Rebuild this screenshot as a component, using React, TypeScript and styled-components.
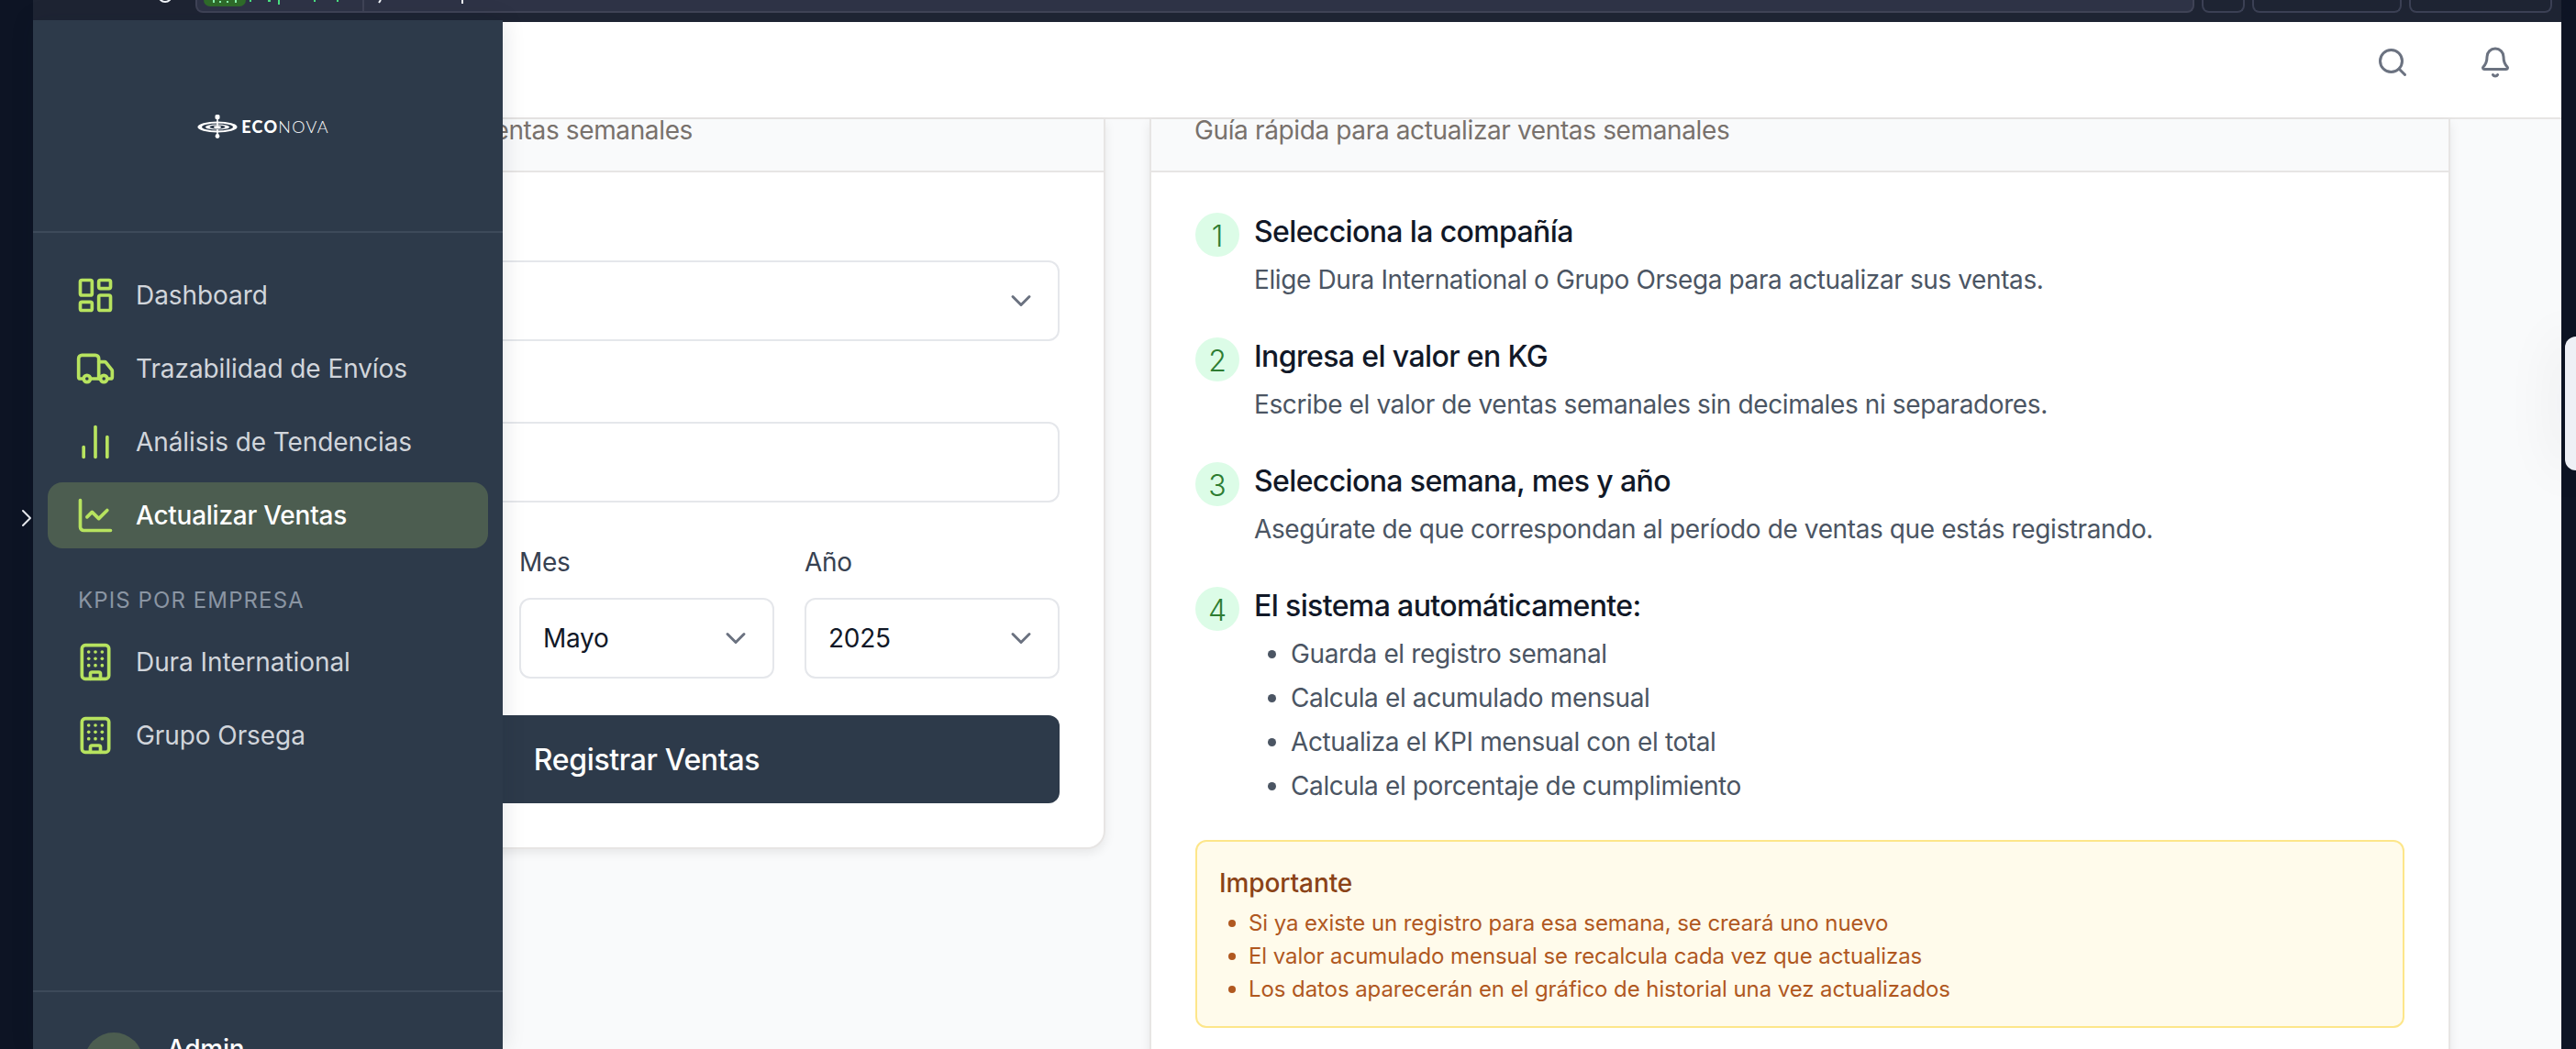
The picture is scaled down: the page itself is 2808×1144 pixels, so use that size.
import React from "react";
import styled, { createGlobalStyle } from "styled-components";
import { LayoutDashboard, Truck, ChartNoAxesColumn, ChartLine, Building, Search, Bell, ChevronDown, ChevronRight } from "lucide-react";

const Global = createGlobalStyle`
  html, body { margin: 0; padding: 0; height: 100%; overflow: hidden; background: #0d1424; }
  * { box-sizing: border-box; }
  #root { height: 100%; }
  body { font-family: Inter, "Liberation Sans", sans-serif; }
`;

const Desktop = styled.div`
  position: relative;
  width: 2808px;
  height: 1144px;
  overflow: hidden;
  background: #0d1424;
  padding: 0 16px 0 36px;
  display: flex;
  flex-direction: column;
`;

const Handle = styled.div`
  position: absolute;
  left: 13px;
  top: 549px;
  color: #e5e7eb;
  display: flex;
`;

const EdgeTab = styled.div`
  position: absolute;
  right: 0;
  top: 367px;
  width: 12px;
  height: 146px;
  background: #eef0f6;
  border-radius: 16px 0 0 16px;
  box-shadow: 0 0 60px rgba(15, 23, 42, 0.16);
`;

const BrowserBar = styled.div`
  flex: 0 0 24px;
  height: 24px;
  background: #1e2433;
  display: flex;
  align-items: flex-start;
  padding-left: 136px;
  overflow: hidden;
`;

const Ring = styled.span`
  width: 16px;
  height: 16px;
  margin-top: -13px;
  border: 2px solid #f1f5f9;
  border-radius: 50%;
  flex: none;
  margin-right: 25px;
`;

const Address = styled.div`
  flex: 0 0 2179px;
  height: 14px;
  background: #2e3346;
  border: 2px solid #3f4356;
  border-top: 0;
  border-radius: 0 0 8px 8px;
  display: flex;
  overflow: hidden;
`;

const BarButton = styled.span<{ $w: number }>`
  flex: 0 0 ${(p) => p.$w}px;
  height: 14px;
  margin-left: 8px;
  border: 2px solid #3b4054;
  border-top: 0;
  border-radius: 0 0 8px 8px;
`;

const Main = styled.div`
  flex: 1;
  min-height: 0;
  display: flex;
  flex-direction: column;
  background: #f9fafb;
`;

const Header = styled.header`
  flex: 0 0 106px;
  background: #fff;
  border-bottom: 2px solid #e7e5e4;
  display: flex;
  justify-content: flex-end;
  align-items: flex-start;
  gap: 76px;
  padding: 26px 54px 0 0;
  color: #6b7280;
`;

const Content = styled.div`
  flex: 1;
  min-height: 0;
  display: grid;
  grid-template-columns: 1000px 1418px;
  column-gap: 48px;
  padding-left: 169px;
  align-items: start;
`;

const Card = styled.section`
  background: #fff;
  border: 2px solid #e7e5e4;
  border-top: 0;
  border-radius: 0 0 20px 20px;
  box-shadow: 0 4px 12px rgba(0, 0, 0, 0.08);
`;

const CardHead = styled.div<{ $inset: number }>`
  height: 58px;
  background: #f9fafb;
  border-bottom: 2px solid #e7e5e4;
  padding-left: ${(p) => p.$inset}px;
  font-size: 28px;
  line-height: 24px;
  letter-spacing: -0.37px;
  color: #78716c;
  white-space: nowrap;
`;

const FormBody = styled.div`
  padding: 37px 48px 48px 48px;
  display: flex;
  flex-direction: column;
  gap: 29px;
`;

const Field = styled.div`
  display: flex;
  flex-direction: column;
  gap: 19px;
  min-width: 0;
`;

const Label = styled.label`
  min-height: 40px;
  font-size: 28px;
  line-height: 40px;
  letter-spacing: -0.3px;
  color: #374151;
`;

const Control = styled.div`
  height: 88px;
  border: 2px solid #e5e7eb;
  border-radius: 12px;
  background: #fff;
  display: flex;
  align-items: center;
  justify-content: space-between;
  padding: 0 22px 0 24px;
  font-size: 28px;
  letter-spacing: -0.3px;
  color: #111827;
  svg { color: #6b7280; margin-left: auto; }
`;

const DateRow = styled.div`
  display: grid;
  grid-template-columns: repeat(3, 1fr);
  gap: 33px;
  margin-top: 16px;
`;

const Submit = styled.button`
  height: 96px;
  margin-top: 11px;
  border: 0;
  border-radius: 12px;
  background: #2d3a4a;
  color: #fff;
  font-family: inherit;
  font-size: 32px;
  letter-spacing: -0.35px;
  font-weight: 500;
`;

const GuideBody = styled.div`
  padding: 44px 48px 48px 48px;
`;

const Step = styled.div`
  display: flex;
  gap: 16px;
  margin-bottom: 41px;
`;

const StepNum = styled.span`
  flex: 0 0 48px;
  height: 48px;
  padding-top: 2px;
  border-radius: 50%;
  background: #dcfce7;
  color: #2e7d32;
  font-size: 32px;
  font-weight: 300;
  display: flex;
  align-items: center;
  justify-content: center;
`;

const StepTitle = styled.div`
  font-size: 32px;
  line-height: 42px;
  letter-spacing: -0.62px;
  font-weight: 500;
  color: #111827;
`;

const StepText = styled.div`
  margin-top: 9px;
  font-size: 28px;
  line-height: 44px;
  letter-spacing: -0.39px;
  color: #4b5563;
`;

const Bullets = styled.ul`
  list-style: none;
  margin: 11px 0 0;
  padding: 0 0 0 40px;
  display: flex;
  flex-direction: column;
  gap: 8px;
`;

const Bullet = styled.li`
  position: relative;
  font-size: 28px;
  line-height: 40px;
  letter-spacing: -0.37px;
  color: #4b5563;
  &::before {
    content: "";
    position: absolute;
    left: -25px;
    top: 16px;
    width: 9px;
    height: 9px;
    border-radius: 50%;
    background: #4b5563;
  }
`;

const Notice = styled.div`
  margin-top: -2px;
  height: 205px;
  background: #fffbeb;
  border: 2px solid #fde68a;
  border-radius: 12px;
  padding: 25px 24px 0;
`;

const NoticeTitle = styled.div`
  font-size: 28px;
  line-height: 40px;
  letter-spacing: -0.1px;
  font-weight: 500;
  color: #8a4318;
`;

const NoticeList = styled.ul`
  list-style: none;
  margin: 6px 0 0;
  padding: 0 0 0 32px;
`;

const NoticeItem = styled.li`
  position: relative;
  font-size: 24px;
  line-height: 36px;
  letter-spacing: -0.08px;
  color: #b0581f;
  &::before {
    content: "";
    position: absolute;
    left: -22px;
    top: 14px;
    width: 8px;
    height: 8px;
    border-radius: 50%;
    background: #b0581f;
  }
`;

const Sidebar = styled.aside`
  position: absolute;
  left: 36px;
  top: 22px;
  bottom: 0;
  width: 512px;
  background: #2d3a4a;
  display: flex;
  flex-direction: column;
  box-shadow: 0 0 24px rgba(15, 23, 42, 0.12);
`;

const Brand = styled.div`
  flex: 0 0 232px;
  border-bottom: 2px solid #3d4a5a;
  display: flex;
  align-items: flex-start;
  justify-content: center;
  padding: 103px 10px 0 0;
  gap: 4px;
  color: #fff;
`;

const BrandText = styled.span`
  font-family: Lato, Inter, sans-serif;
  font-size: 18px;
  line-height: 26px;
  letter-spacing: 1.3px;
  font-weight: 300;
  strong { font-weight: 900; }
`;

const Nav = styled.nav`
  flex: 1;
  padding: 32px 16px 0;
  display: flex;
  flex-direction: column;
  gap: 8px;
`;

const NavItem = styled.a<{ $active?: boolean }>`
  height: 72px;
  border-radius: 16px;
  display: flex;
  align-items: center;
  gap: 22px;
  padding-left: 30px;
  font-size: 28px;
  letter-spacing: ${(p) => (p.$active ? "-0.25px" : "-0.08px")};
  color: ${(p) => (p.$active ? "#fff" : "#d1d5db")};
  font-weight: ${(p) => (p.$active ? 500 : 400)};
  background: ${(p) => (p.$active ? "#4c5d50" : "transparent")};
  svg { color: #b7e35f; flex: none; }
`;

const NavLabel = styled.div`
  margin: 33px 0 7px;
  padding-left: 33px;
  font-size: 24px;
  line-height: 32px;
  letter-spacing: 1.1px;
  color: #8a95a3;
`;

const Footer = styled.div`
  flex: 0 0 64px;
  overflow: hidden;
  border-top: 2px solid #3d4a5a;
  padding: 44px 0 0 56px;
  display: flex;
  gap: 26px;
`;

const Avatar = styled.span`
  flex: 0 0 64px;
  height: 64px;
  border-radius: 50%;
  background: #4c5d50;
`;

const UserName = styled.span`
  font-size: 28px;
  line-height: 36px;
  letter-spacing: -0.3px;
  font-weight: 500;
  color: #fff;
`;

const Logo = () => (
  <svg width="44" height="26" viewBox="0 0 44 26" fill="none">
    <ellipse cx="22" cy="13.5" rx="21.5" ry="6" fill="#fff" />
    <ellipse cx="22" cy="13.5" rx="17" ry="4" fill="#2d3a4a" />
    <ellipse cx="22" cy="13.5" rx="13" ry="3" fill="#fff" />
    <ellipse cx="22" cy="13.5" rx="8.5" ry="2" fill="#2d3a4a" />
    <ellipse cx="22" cy="13.5" rx="4" ry="1.6" fill="#fff" />
    <rect x="21.2" y="3" width="1.6" height="9" fill="#fff" />
    <rect x="19.5" y="0" width="5" height="5" rx="1.5" fill="#fff" />
    <rect x="21.2" y="16" width="1.6" height="6" fill="#fff" />
    <circle cx="22" cy="23.5" r="2.4" fill="#fff" />
  </svg>
);

/* The strip of the browser's address bar: only the feet of its glyphs are in view. */
const AddressBits = () => (
  <svg width="320" height="12" viewBox="0 0 320 12" fill="none">
    <rect x="7" y="-8" width="46" height="15" rx="7" fill="#2f6b2a" />
    <rect x="17" y="0" width="2" height="3" fill="#86efac" />
    <rect x="24" y="1" width="2" height="2" fill="#86efac" />
    <rect x="32" y="1" width="2" height="2" fill="#86efac" />
    <rect x="41" y="0" width="2" height="3" fill="#86efac" />
    <rect x="57" y="0" width="2" height="2" fill="#4ade80" />
    <rect x="77" y="0" width="3" height="2" fill="#4ade80" />
    <rect x="88" y="0" width="2" height="5" fill="#4ade80" />
    <rect x="127" y="0" width="2" height="2" fill="#4ade80" />
    <rect x="152" y="0" width="2" height="2" fill="#4ade80" />
    <rect x="180" y="0" width="2" height="12" fill="#3f4356" />
    <path d="M200 0l-2 3" stroke="#f1f5f9" strokeWidth="2" />
    <rect x="288" y="0" width="2" height="4" fill="#f1f5f9" />
  </svg>
);

const steps = [
  { n: 1, t: "Selecciona la compañía", d: "Elige Dura International o Grupo Orsega para actualizar sus ventas." },
  { n: 2, t: "Ingresa el valor en KG", d: "Escribe el valor de ventas semanales sin decimales ni separadores." },
  { n: 3, t: "Selecciona semana, mes y año", d: "Asegúrate de que correspondan al período de ventas que estás registrando." },
];

const auto = ["Guarda el registro semanal", "Calcula el acumulado mensual", "Actualiza el KPI mensual con el total", "Calcula el porcentaje de cumplimiento"];
const notes = [
  "Si ya existe un registro para esa semana, se creará uno nuevo",
  "El valor acumulado mensual se recalcula cada vez que actualizas",
  "Los datos aparecerán en el gráfico de historial una vez actualizados",
];

export default function App() {
  return (
    <>
      <Global />
      <Desktop>
        <BrowserBar>
          <Ring />
          <Address>
            <AddressBits />
          </Address>
          <BarButton $w={47} />
          <BarButton $w={163} />
          <BarButton $w={156} />
        </BrowserBar>
        <Main>
          <Header>
            <Search size={36} strokeWidth={2} />
            <Bell size={36} strokeWidth={2} />
          </Header>
          <Content>
            <Card>
              <CardHead $inset={273}>las ventas semanales</CardHead>
              <FormBody>
                <Field>
                  <Label />
                  <Control><ChevronDown size={36} strokeWidth={2} /></Control>
                </Field>
                <Field>
                  <Label />
                  <Control />
                </Field>
                <DateRow>
                  <Field>
                    <Label />
                    <Control />
                  </Field>
                  <Field>
                    <Label>Mes</Label>
                    <Control>Mayo<ChevronDown size={36} strokeWidth={2} /></Control>
                  </Field>
                  <Field>
                    <Label>Año</Label>
                    <Control>2025<ChevronDown size={36} strokeWidth={2} /></Control>
                  </Field>
                </DateRow>
                <Submit>Registrar Ventas</Submit>
              </FormBody>
            </Card>
            <Card>
              <CardHead $inset={47}>Guía rápida para actualizar ventas semanales</CardHead>
              <GuideBody>
                {steps.map((s) => (
                  <Step key={s.n}>
                    <StepNum>{s.n}</StepNum>
                    <div>
                      <StepTitle>{s.t}</StepTitle>
                      <StepText>{s.d}</StepText>
                    </div>
                  </Step>
                ))}
                <Step>
                  <StepNum>4</StepNum>
                  <div>
                    <StepTitle>El sistema automáticamente:</StepTitle>
                    <Bullets>
                      {auto.map((a) => <Bullet key={a}>{a}</Bullet>)}
                    </Bullets>
                  </div>
                </Step>
                <Notice>
                  <NoticeTitle>Importante</NoticeTitle>
                  <NoticeList>
                    {notes.map((a) => <NoticeItem key={a}>{a}</NoticeItem>)}
                  </NoticeList>
                </Notice>
              </GuideBody>
            </Card>
          </Content>
        </Main>
        <Sidebar>
          <Brand>
            <Logo />
            <BrandText><strong>ECO</strong>NOVA</BrandText>
          </Brand>
          <Nav>
            <NavItem><LayoutDashboard size={44} strokeWidth={2} />Dashboard</NavItem>
            <NavItem><Truck size={44} strokeWidth={2} />Trazabilidad de Envíos</NavItem>
            <NavItem><ChartNoAxesColumn size={44} strokeWidth={2} />Análisis de Tendencias</NavItem>
            <NavItem $active><ChartLine size={44} strokeWidth={2} />Actualizar Ventas</NavItem>
            <NavLabel>KPIS POR EMPRESA</NavLabel>
            <NavItem><Building size={44} strokeWidth={2} />Dura International</NavItem>
            <NavItem><Building size={44} strokeWidth={2} />Grupo Orsega</NavItem>
          </Nav>
          <Footer>
            <Avatar />
            <UserName>Admin</UserName>
          </Footer>
        </Sidebar>
        <Handle><ChevronRight size={32} strokeWidth={1.5} /></Handle>
        <EdgeTab />
      </Desktop>
    </>
  );
}
